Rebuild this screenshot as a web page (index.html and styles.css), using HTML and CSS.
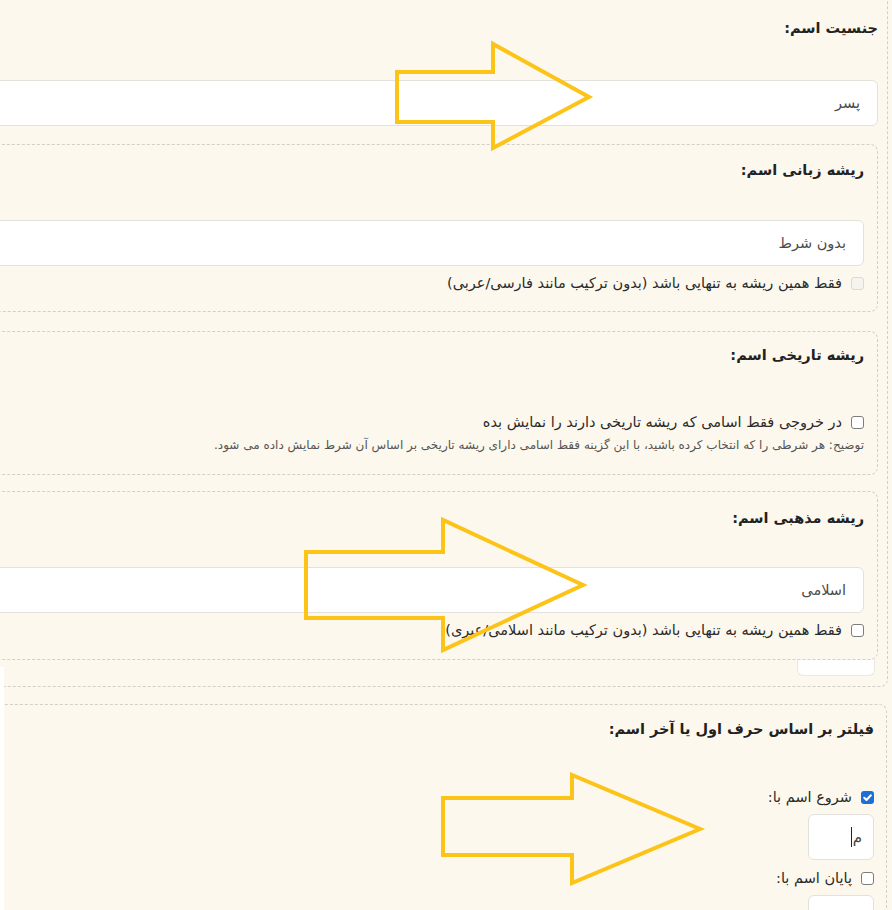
FILE: index.html
```html
<!DOCTYPE html>
<html lang="fa" dir="rtl">
<head>
<meta charset="utf-8">
<title>فیلتر اسم</title>
<link rel="stylesheet" href="styles.css">
</head>
<body>
<div class="page">
  <div class="outer">
    <h3 class="title">جنسیت اسم:</h3>
    <div class="field">پسر</div>

    <section class="box box-lang">
      <h3 class="title">ریشه زبانی اسم:</h3>
      <div class="field">بدون شرط</div>
      <label class="check-row">
        <span class="cb cb-disabled"></span>
        <span>فقط همین ریشه به تنهایی باشد (بدون ترکیب مانند فارسی/عربی)</span>
      </label>
    </section>

    <section class="box box-hist">
      <h3 class="title">ریشه تاریخی اسم:</h3>
      <label class="check-row">
        <span class="cb"></span>
        <span>در خروجی فقط اسامی که ریشه تاریخی دارند را نمایش بده</span>
      </label>
      <p class="hint">توضیح: هر شرطی را که انتخاب کرده باشید، با این گزینه فقط اسامی دارای ریشه تاریخی بر اساس آن شرط نمایش داده می شود.</p>
    </section>

    <section class="box box-rel">
      <h3 class="title">ریشه مذهبی اسم:</h3>
      <div class="field">اسلامی</div>
      <label class="check-row">
        <span class="cb"></span>
        <span>فقط همین ریشه به تنهایی باشد (بدون ترکیب مانند اسلامی/عبری)</span>
      </label>
    </section>
    <div class="peek"></div>
  </div>

  <section class="box box-letter">
    <h3 class="title">فیلتر بر اساس حرف اول یا آخر اسم:</h3>
    <label class="check-row row-start">
      <span class="cb cb-checked"><svg viewBox="0 0 13 13" width="13" height="13"><path d="M3.2 6.8 L5.5 9 L9.9 4.2" fill="none" stroke="#fff" stroke-width="2" stroke-linecap="round" stroke-linejoin="round"/></svg></span>
      <span>شروع اسم با:</span>
    </label>
    <div class="small-field"><span>م</span><span class="caret"></span></div>
    <label class="check-row row-end">
      <span class="cb"></span>
      <span>پایان اسم با:</span>
    </label>
    <div class="small-field"></div>
  </section>

  <div class="edge-strip"></div>

  <svg class="arrows" width="892" height="910" viewBox="0 0 892 910">
    <polygon points="397,72 493,72 493,44 589,97 493,148 493,122 397,122"/>
    <polygon points="306,552 443,552 443,520 583,585 443,650 443,618 306,618"/>
    <polygon points="443,798 572,798 572,775 700,829 572,883 572,855 443,855"/>
  </svg>
</div>
</body>
</html>
```
FILE: styles.css
```css
html, body {
  margin: 0;
  padding: 0;
}
body {
  background: #fdf8ed;
  direction: rtl;
  font-family: "DejaVu Sans", "Noto Sans", sans-serif;
  color: #212529;
  overflow: hidden;
}
.page {
  position: relative;
  width: 892px;
  height: 910px;
  overflow: hidden;
}
.outer {
  width: 1300px;
  margin: -30px 4px 0 0;
  padding: 45px 9px 10px 0;
  border: 1px dashed #d2cfc6;
  border-radius: 8px;
  box-sizing: border-box;
}
.title {
  margin: 0 0 40px 0;
  font-size: 14.5px;
  line-height: 24px;
  font-weight: bold;
  color: #222;
}
.field {
  height: 46px;
  box-sizing: border-box;
  background: #fff;
  border: 1px solid #e3e1dc;
  border-radius: 6px;
  padding: 0 17px;
  display: flex;
  align-items: center;
  font-size: 14.5px;
  color: #4a4a4a;
}
.box {
  border: 1px dashed #d2cfc6;
  border-radius: 8px;
  padding: 13px 13px 17px 0;
}
.box-lang {
  margin-top: 18px;
}
.box-lang .title {
  margin-bottom: 38px;
}
.box-hist {
  margin-top: 19px;
  padding-top: 11px;
  padding-bottom: 20px;
}
.box-hist .title {
  margin-bottom: 44px;
}
.box-rel {
  margin-top: 16px;
  padding-top: 14px;
  padding-bottom: 18px;
}
.box-rel .title {
  margin-bottom: 37px;
}
.check-row {
  display: flex;
  align-items: center;
  gap: 9px;
  height: 22px;
  margin-top: 6px;
  font-size: 14.5px;
  color: #2a2a2a;
}
.box-hist .check-row {
  margin-top: 0;
}
.cb {
  flex: none;
  width: 13px;
  height: 13px;
  box-sizing: border-box;
  border: 1.5px solid #7d7d7d;
  border-radius: 3px;
  background: #fff;
  display: flex;
}
.cb-disabled {
  border: 1px solid #dcdad5;
  background: #f6f4ef;
}
.cb-checked {
  border: none;
  background: #1b6fd6;
}
.hint {
  margin: 3px 0 0 0;
  font-size: 12px;
  line-height: 18px;
  color: #555;
}
.peek {
  width: 78px;
  height: 16px;
  margin-right: 3px;
  box-sizing: border-box;
  background: #fff;
  border: 1px solid #ebe8e2;
  border-top: none;
  border-radius: 0 0 6px 6px;
}
.box-letter {
  width: 1300px;
  margin: 17px 5px 0 0;
  padding: 12px 12px 0 0;
  box-sizing: border-box;
  border-bottom: none;
}
.box-letter .title {
  margin-bottom: 45px;
}
.row-start {
  margin-top: 0;
}
.row-end {
  margin-top: 7px;
}
.small-field {
  width: 66px;
  height: 46px;
  margin-top: 6px;
  box-sizing: border-box;
  background: #fff;
  border: 1px solid #e3e1dc;
  border-radius: 6px;
  display: flex;
  align-items: center;
  gap: 1px;
  padding-right: 11px;
  font-size: 15px;
  color: #444;
}
.caret {
  width: 1px;
  height: 20px;
  background: #222;
}
.edge-strip {
  position: absolute;
  left: 0;
  top: 667px;
  width: 4px;
  bottom: 0;
  background: #fff;
}
.arrows {
  position: absolute;
  left: 0;
  top: 0;
  pointer-events: none;
}
.arrows polygon {
  fill: none;
  stroke: #fcc418;
  stroke-width: 4;
  stroke-linejoin: miter;
}
```
